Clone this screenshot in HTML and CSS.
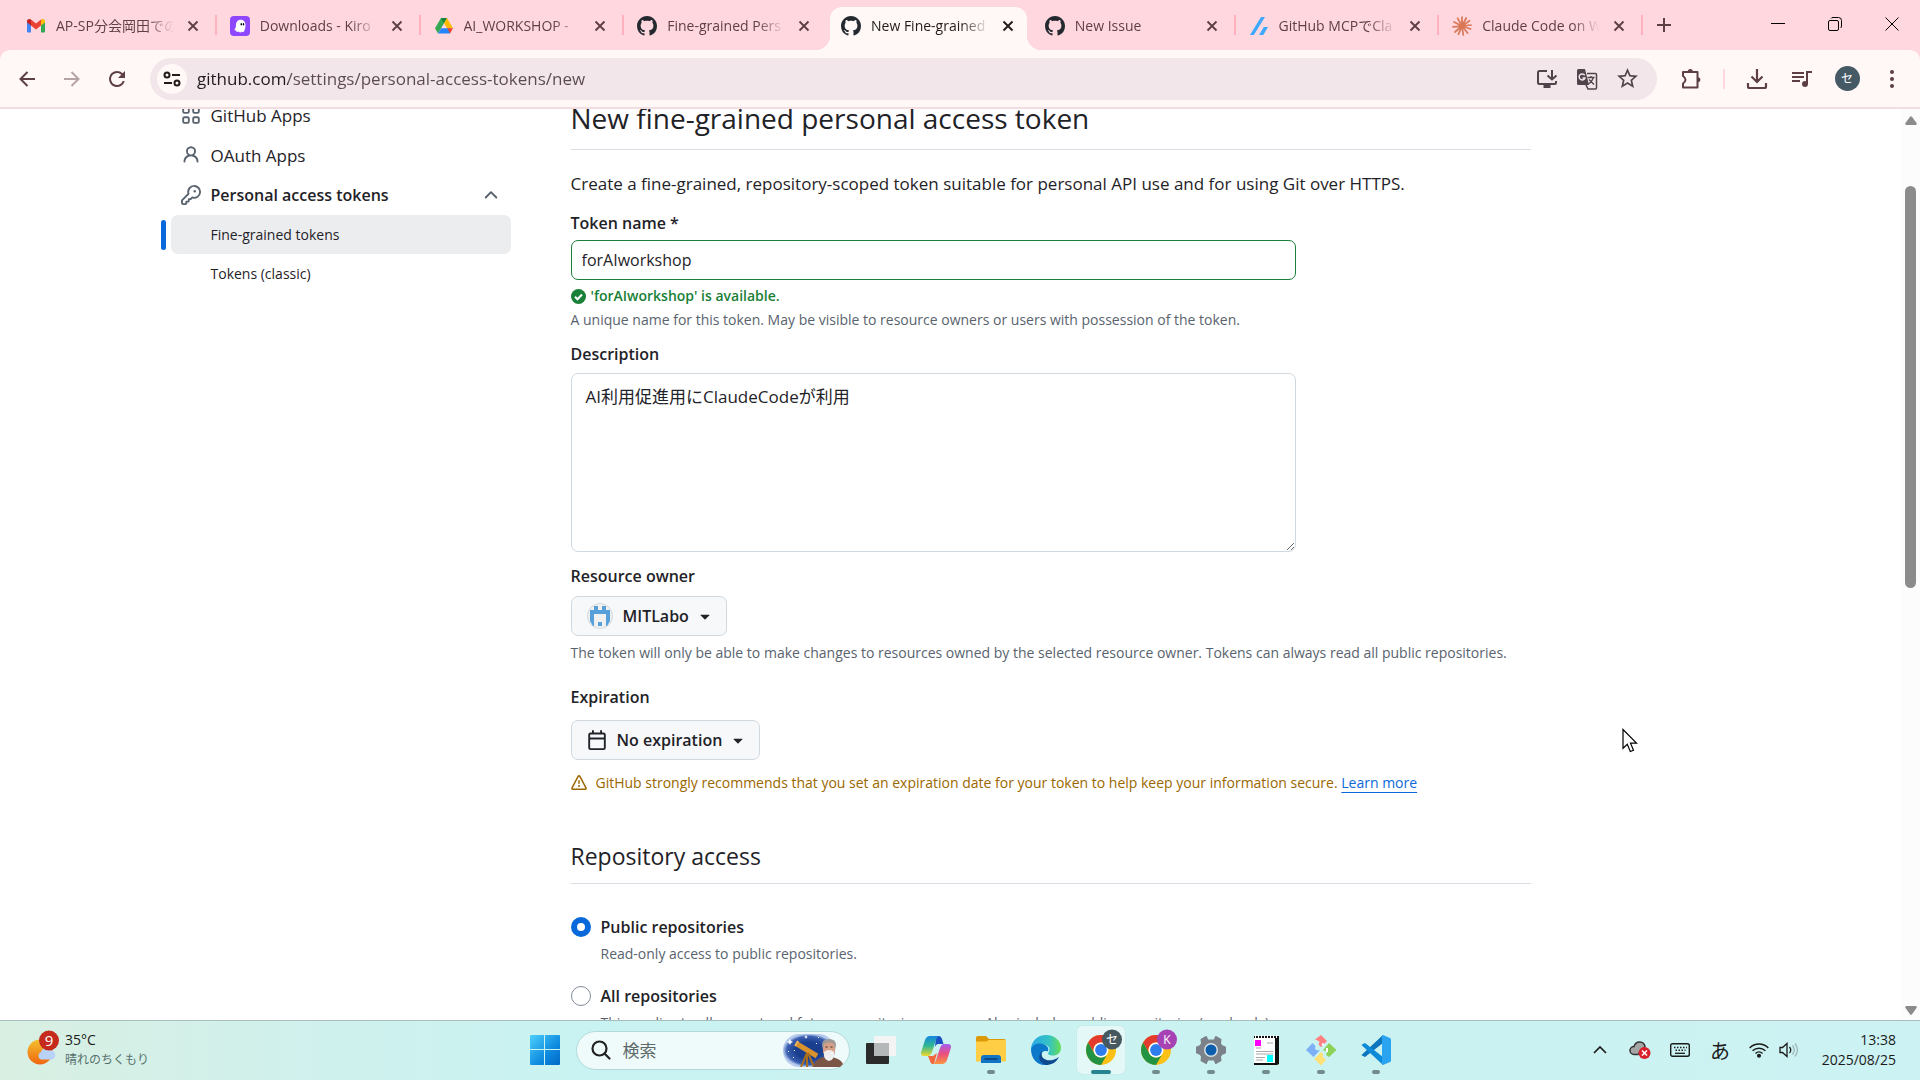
FILE: index.html
```html
<!DOCTYPE html>
<html lang="ja">
<head>
<meta charset="utf-8">
<title>New Fine-grained Personal Access Token</title>
<link rel="stylesheet" href="styles.css">
</head>
<body>
<svg class="defs" aria-hidden="true">
  <symbol id="gh" viewBox="0 0 16 16"><path fill="#24292f" d="M8 0c4.42 0 8 3.58 8 8a8.013 8.013 0 0 1-5.45 7.59c-.4.08-.55-.17-.55-.38 0-.27.01-1.13.01-2.2 0-.75-.25-1.23-.54-1.48 1.78-.2 3.65-.88 3.65-3.95 0-.88-.31-1.59-.82-2.15.08-.2.36-1.02-.08-2.12 0 0-.67-.22-2.2.82-.64-.18-1.32-.27-2-.27-.68 0-1.36.09-2 .27-1.53-1.03-2.2-.82-2.2-.82-.44 1.1-.16 1.92-.08 2.12-.51.56-.82 1.28-.82 2.15 0 3.06 1.86 3.75 3.64 3.95-.23.2-.44.55-.51 1.07-.46.21-1.61.55-2.33-.66-.15-.24-.6-.83-1.23-.82-.67.01-.27.38.01.53.34.19.73.9.82 1.13.16.45.68 1.31 2.69.94 0 .67.01 1.3.01 1.49 0 .21-.15.45-.55.38A7.995 7.995 0 0 1 0 8c0-4.42 3.58-8 8-8Z"/></symbol>
  <symbol id="x" viewBox="0 0 12 12"><path d="M1.5 1.5l9 9M10.5 1.5l-9 9" stroke="currentColor" stroke-width="1.9" fill="none"/></symbol>
  <symbol id="caret" viewBox="0 0 16 16"><path fill="currentColor" d="m4.427 7.427 3.396 3.396a.25.25 0 0 0 .354 0l3.396-3.396A.25.25 0 0 0 11.396 7H4.604a.25.25 0 0 0-.177.427Z"/></symbol>
  <symbol id="chrome" viewBox="0 0 30 30">
    <circle cx="15" cy="15" r="15" fill="#fbc116"/>
    <path fill="#e33b2e" d="M2.01 7.5A15 15 0 0 1 28 7.5H15A7.5 7.5 0 0 0 8.5 18.75z"/>
    <path fill="#229342" d="M2.01 7.5A15 15 0 0 0 15 30l6.5-11.25a7.5 7.5 0 0 1-13 0z"/>
    <circle cx="15" cy="15" r="7.5" fill="#fff"/><circle cx="15" cy="15" r="5.9" fill="#2f7ded"/>
  </symbol>
</svg>

<header class="browser">
  <div class="tabstrip">
    <ul class="tabs">
      <li class="tab"><div class="tab-body">
        <svg class="favicon" viewBox="0 0 20 20"><path fill="#4285f4" d="M1 5v10.500a1 1 0 0 0 1 1h3V8z"/><path fill="#34a853" d="M19 5v10.500a1 1 0 0 1-1 1h-3V8z"/><path fill="#c5221f" d="M1 5.200C1 3 3.500 2.400 5 3.600V9.600L1 6.600z"/><path fill="#fbbc04" d="M19 5.200C19 3 16.500 2.400 15 3.600V9.600l4-3z"/><path fill="#ea4335" d="M5 3.600l5 3.800 5-3.800v6L10 13.400 5 9.600z"/></svg>
        <span class="tab-title">AP-SP分会岡田での</span><button class="tab-close" aria-label="Close tab"><svg width="12" height="12"><use href="#x"/></svg></button></div></li>
      <li class="tab"><div class="tab-body">
        <svg class="favicon" viewBox="0 0 20 20"><rect width="20" height="20" rx="4" fill="#8e47ff"/><path fill="#fff" d="M6 9C6 2 15.500 2 15.500 9c0 3-.7 4.800-1.400 6.200-.6 1.300-1.800 1.200-2.300.4-.8 1.200-2.600 1.100-2.900-.1-1.200.8-2.900.5-2.700-1-1.700.4-2-.7-1.200-1.800.8-1.100 1-2.200 1-3.700z"/><ellipse cx="11.300" cy="8.300" rx=".7" ry="1.200"/><ellipse cx="13.500" cy="8.300" rx=".7" ry="1.200"/></svg>
        <span class="tab-title">Downloads - Kiro</span><button class="tab-close" aria-label="Close tab"><svg width="12" height="12"><use href="#x"/></svg></button></div></li>
      <li class="tab"><div class="tab-body">
        <svg class="favicon" viewBox="0 0 20 20"><path fill="#34a853" d="M7 2h6L10 7.300 4 17.500l-3-5.200z"/><path fill="#188038" d="M7 2h6L10 7.300z"/><path fill="#ffba00" d="M13 2l6 10.200h-5.800L10 7.300z"/><path fill="#2684fc" d="M7.200 12.200H16V17.500H4z"/><path fill="#ea4335" d="M13.200 12.200H19l-3 5.300z"/></svg>
        <span class="tab-title">AI_WORKSHOP -</span><button class="tab-close" aria-label="Close tab"><svg width="12" height="12"><use href="#x"/></svg></button></div></li>
      <li class="tab tab-plain"><div class="tab-body">
        <svg class="favicon"><use href="#gh"/></svg>
        <span class="tab-title">Fine-grained Pers</span><button class="tab-close" aria-label="Close tab"><svg width="12" height="12"><use href="#x"/></svg></button></div></li>
      <li class="tab tab-plain tab-active"><div class="tab-body">
        <svg class="favicon"><use href="#gh"/></svg>
        <span class="tab-title">New Fine-grained</span><button class="tab-close" aria-label="Close tab"><svg width="12" height="12"><use href="#x"/></svg></button></div></li>
      <li class="tab"><div class="tab-body">
        <svg class="favicon"><use href="#gh"/></svg>
        <span class="tab-title">New Issue</span><button class="tab-close" aria-label="Close tab"><svg width="12" height="12"><use href="#x"/></svg></button></div></li>
      <li class="tab"><div class="tab-body">
        <svg class="favicon" viewBox="0 0 20 20"><path fill="#3ea8ff" d="M1 19h3.800L16 1h-4z"/><path fill="#3ea8ff" d="M10 19h3.700a1 1 0 0 0 .9-.5L19 11h-4.200z"/></svg>
        <span class="tab-title">GitHub MCPでCla</span><button class="tab-close" aria-label="Close tab"><svg width="12" height="12"><use href="#x"/></svg></button></div></li>
      <li class="tab"><div class="tab-body">
        <svg class="favicon" viewBox="0 0 20 20"><path stroke="#d97757" stroke-width="1.700" stroke-linecap="round" d="M10 10V1M10 10l4.200-8M10 10l7.500-5.300M10 10l9-1M10 10l8.500 3M10 10l5.600 7M10 10l1.300 9M10 10l-3.600 8.300M10 10l-7 6M10 10l-9 .9M10 10L2 6M10 10L5.500 2.200"/></svg>
        <span class="tab-title">Claude Code on W</span><button class="tab-close" aria-label="Close tab"><svg width="12" height="12"><use href="#x"/></svg></button></div></li>
    </ul>
    <button class="new-tab" aria-label="New tab"><svg width="14" height="14" viewBox="0 0 14 14"><path d="M7 0v14M0 7h14" stroke="currentColor" stroke-width="2"/></svg></button>
    <div class="window-controls">
      <button aria-label="Minimize"><svg width="14" height="14" viewBox="0 0 14 14"><path d="M0 6.500h14" stroke="#000"/></svg></button>
      <button aria-label="Restore"><svg width="14" height="14" viewBox="0 0 14 14" fill="none" stroke="#000"><rect x=".5" y="3.500" width="10" height="10" rx="1.500"/><path d="M3 1.500Q3.500.5 5 .5h5.500a3 3 0 0 1 3 3V9q0 1.500-1 2"/></svg></button>
      <button aria-label="Close"><svg width="14" height="14" viewBox="0 0 14 14"><path d="M.5.5l13 13M13.500.5l-13 13" stroke="#000"/></svg></button>
    </div>
  </div>
  <div class="toolbar">
    <button class="tool" aria-label="Back"><svg width="16" height="16" viewBox="0 0 16 16"><path d="M16 8H2M8.500 1L1.500 8l7 7" fill="none" stroke="currentColor" stroke-width="2"/></svg></button>
    <button class="tool tool-off" aria-label="Forward"><svg width="16" height="16" viewBox="0 0 16 16"><path d="M0 8h14M7.500 1l7 7-7 7" fill="none" stroke="currentColor" stroke-width="2"/></svg></button>
    <button class="tool" aria-label="Reload"><svg width="24" height="24" viewBox="0 0 24 24"><path fill="currentColor" d="M17.650 6.350A7.950 7.950 0 0 0 12 4a8 8 0 1 0 7.730 10h-2.080A6 6 0 1 1 12 6c1.660 0 3.140.690 4.220 1.780L13 11h7V4l-2.350 2.350z"/></svg></button>
    <div class="omnibox">
      <button class="site-info" aria-label="Site information"><svg width="18" height="16" viewBox="0 0 18 16" fill="none" stroke="#201a1b" stroke-width="2"><circle cx="4" cy="4" r="2.500"/><path d="M9 4h8M1 12h8"/><circle cx="14" cy="12" r="2.500"/></svg></button>
      <input class="url" type="text" aria-label="Address" value="github.com/settings/personal-access-tokens/new">
      <button class="tool" aria-label="Install"><svg width="22" height="20" viewBox="0 0 22 20" fill="none" stroke="currentColor" stroke-width="2"><path d="M11 2H3.500Q2 2 2 3.500v10Q2 15 3.500 15h15q1.500 0 1.500-1.500V12M16 1v9M11.500 6.500L16 10.500l4.500-4"/><path d="M7.500 17.500h7" stroke-width="3"/></svg></button>
      <button class="tool" aria-label="Translate"><svg width="22" height="22" viewBox="0 0 22 22"><path fill="currentColor" d="M2.500 1H9l4 16H2.500Q1 17 1 15.500v-13Q1 1 2.500 1z"/><path d="M11 5.500h8.500q1 0 1 1V20q0 1-1 1H12l-2-4" fill="none" stroke="currentColor" stroke-width="1.500"/><path d="M8.700 7.300A3 3 0 1 0 9 10H6.500" fill="none" stroke="#f2e6ea" stroke-width="1.500"/><path d="M11.500 9.500h7M15 8v1.500M17.500 9.500q-1.500 4.500-5 6.500M13 11.500l5 5" fill="none" stroke="currentColor" stroke-width="1.300"/></svg></button>
      <button class="tool" aria-label="Bookmark"><svg width="23" height="23" viewBox="1 1 22 22"><path fill="currentColor" d="M22 9.240l-7.190-.620L12 2 9.190 8.630 2 9.240l5.460 4.730L5.820 21 12 17.270 18.180 21l-1.630-7.030L22 9.240zM12 15.400l-3.760 2.270 1-4.280-3.320-2.880 4.380-.380L12 6.100l1.710 4.040 4.380.380-3.320 2.880 1 4.280L12 15.400z"/></svg></button>
    </div>
    <button class="tool" aria-label="Extensions"><svg width="22" height="22" viewBox="0 0 22 22"><path d="M3 4h14.500v15.500H3V15.500q2.500-1.500 2.500-3.700T3 8z" fill="none" stroke="currentColor" stroke-width="2" stroke-linejoin="round"/><path fill="currentColor" d="M7.800 3.500a2.500 2.500 0 0 1 5 0zM18 9.200a2.500 2.500 0 0 1 0 5z"/></svg></button>
    <span class="tool-divider"></span>
    <button class="tool" aria-label="Downloads"><svg width="22" height="22" viewBox="0 0 22 22"><path d="M11 1v13M5.500 8.500L11 14l5.500-5.500M2 15v3.500Q2 20 3.500 20h15q1.500 0 1.500-1.500V15" fill="none" stroke="currentColor" stroke-width="2.200"/></svg></button>
    <button class="tool" aria-label="Media"><svg width="20" height="18" viewBox="0 0 20 18"><path d="M0 3h12M0 7h12M0 11h8M15 14V2h5" fill="none" stroke="currentColor" stroke-width="2"/><circle cx="13" cy="14" r="3" fill="currentColor"/></svg></button>
    <button class="tool" aria-label="Profile"><span class="profile">セ</span></button>
    <button class="tool" aria-label="Menu"><svg width="6" height="20" viewBox="0 0 6 20" fill="currentColor"><circle cx="3" cy="3" r="2"/><circle cx="3" cy="10" r="2"/><circle cx="3" cy="17" r="2"/></svg></button>
  </div>
</header>

<div class="viewport">
  <div class="page">
    <nav class="sidenav">
      <a class="nav-item" href="#"><svg width="20" height="20" viewBox="0 0 16 16" fill="none" stroke="currentColor" stroke-width="1.500"><rect x="1.750" y="1.750" width="4.500" height="4.500" rx="1"/><rect x="9.750" y="1.750" width="4.500" height="4.500" rx="1"/><rect x="1.750" y="9.750" width="4.500" height="4.500" rx="1"/><rect x="9.750" y="9.750" width="4.500" height="4.500" rx="1"/></svg>GitHub Apps</a>
      <a class="nav-item" href="#"><svg width="20" height="20" viewBox="0 0 16 16"><path fill="currentColor" d="M10.561 8.073a6.005 6.005 0 0 1 3.432 5.142.75.75 0 1 1-1.498.07 4.5 4.5 0 0 0-8.99 0 .75.75 0 0 1-1.498-.07 6.004 6.004 0 0 1 3.431-5.142 3.999 3.999 0 1 1 5.123 0ZM10.5 5a2.5 2.5 0 1 0-5 0 2.5 2.5 0 0 0 5 0Z"/></svg>OAuth Apps</a>
      <button class="nav-item nav-group" aria-expanded="true"><svg width="20" height="20" viewBox="0 0 16 16"><path fill="currentColor" d="M10.5 0a5.499 5.499 0 1 1-1.288 10.848l-.932.932a.749.749 0 0 1-.53.22H7v.75a.749.749 0 0 1-.22.53l-.5.5a.749.749 0 0 1-.53.22H5v.75a.749.749 0 0 1-.22.53l-.5.5a.749.749 0 0 1-.53.22h-2A1.75 1.75 0 0 1 0 14.25v-2c0-.199.079-.389.22-.53l4.932-4.932A5.5 5.5 0 0 1 10.5 0Zm-4 5.5c-.001.431.069.86.205 1.269a.75.75 0 0 1-.181.768L1.5 12.56v1.69c0 .138.112.25.25.25h1.69l.06-.06v-1.19a.75.75 0 0 1 .75-.75h1.19l.06-.06v-1.19a.75.75 0 0 1 .75-.75h1.19l1.023-1.025a.75.75 0 0 1 .768-.18A4 4 0 1 0 6.5 5.5ZM11 6a1 1 0 1 1 0-2 1 1 0 0 1 0 2Z"/></svg><span class="nav-label">Personal access tokens</span><svg width="20" height="20" viewBox="0 0 16 16"><path fill="currentColor" d="M3.220 10.530a.749.749 0 0 1 0-1.060l4.250-4.250a.749.749 0 0 1 1.060 0l4.250 4.250a.751.751 0 1 1-1.060 1.060L8 6.811 4.280 10.530a.749.749 0 0 1-1.060 0Z"/></svg></button>
      <a class="nav-item nav-sub nav-current" href="#" aria-current="page">Fine-grained tokens</a>
      <a class="nav-item nav-sub" href="#">Tokens (classic)</a>
    </nav>

    <main class="content">
      <h1 class="title">New fine-grained personal access token</h1>
      <p class="intro">Create a fine-grained, repository-scoped token suitable for personal API use and for using Git over HTTPS.</p>

      <form class="form">
        <div class="field">
          <label class="label" for="name">Token name *</label>
          <input class="input" id="name" type="text" value="forAIworkshop">
          <p class="valid"><svg width="15" height="15" viewBox="0 0 15 15"><circle cx="7.500" cy="7.500" r="7.500" fill="#1a7f37"/><path d="M4 7.800l2.500 2.500L11 5.500" fill="none" stroke="#fff" stroke-width="2"/></svg>'forAIworkshop' is available.</p>
          <p class="caption">A unique name for this token. May be visible to resource owners or users with possession of the token.</p>
        </div>
        <div class="field">
          <label class="label" for="desc">Description</label>
          <textarea class="input textarea" id="desc">AI利用促進用にClaudeCodeが利用</textarea>
        </div>
        <div class="field field-owner">
          <span class="label" id="owner-label">Resource owner</span>
          <button type="button" class="menu-button" aria-haspopup="menu" aria-labelledby="owner-label owner"><svg width="26" height="26" viewBox="0 0 26 26"><circle cx="13" cy="13" r="12.500" fill="#f0f0f0" stroke="#d1d9e0"/><path fill="#579fd8" d="M7 3h4v4h4V3h4v4h4v4.500V18l-3 5h-1V11H7v12H6l-3-5V7h4z"/><path fill="#579fd8" d="M11 19h4v4h-4z"/></svg><span id="owner">MITLabo</span><svg class="caret" width="20" height="20"><use href="#caret"/></svg></button>
          <p class="caption">The token will only be able to make changes to resources owned by the selected resource owner. Tokens can always read all public repositories.</p>
        </div>
        <div class="field field-expiry">
          <span class="label" id="exp-label">Expiration</span>
          <button type="button" class="menu-button" aria-haspopup="menu" aria-labelledby="exp-label exp"><svg width="20" height="20" viewBox="0 0 16 16"><path fill="currentColor" d="M4.750 0a.75.75 0 0 1 .75.75V2h5V.75a.75.75 0 0 1 1.500 0V2h1.250c.966 0 1.750.784 1.750 1.750v10.500A1.750 1.750 0 0 1 13.250 16H2.750A1.750 1.750 0 0 1 1 14.250V3.750C1 2.784 1.784 2 2.750 2H4V.75A.75.75 0 0 1 4.750 0ZM2.500 7.500v6.750c0 .138.112.25.25.25h10.500a.25.25 0 0 0 .25-.25V7.500Zm10.750-4H2.750a.25.25 0 0 0-.25.25V6h11V3.750a.25.25 0 0 0-.25-.25Z"/></svg><span id="exp">No expiration</span><svg class="caret" width="20" height="20"><use href="#caret"/></svg></button>
          <p class="warning"><svg width="16" height="16" viewBox="0 0 16 16"><path fill="currentColor" d="M6.457 1.047c.659-1.234 2.427-1.234 3.086 0l6.082 11.378A1.75 1.75 0 0 1 14.082 15H1.918a1.75 1.75 0 0 1-1.543-2.575Zm1.763.707a.25.25 0 0 0-.44 0L1.698 13.132a.25.25 0 0 0 .22.368h12.164a.25.25 0 0 0 .22-.368Zm.53 3.996v2.500a.75.75 0 0 1-1.500 0v-2.500a.75.75 0 0 1 1.500 0ZM9 11a1 1 0 1 1-2 0 1 1 0 0 1 2 0Z"/></svg><span>GitHub strongly recommends that you set an expiration date for your token to help keep your information secure. <a class="learn" href="#">Learn more</a></span></p>
        </div>
        <h2 class="subtitle">Repository access</h2>
        <div class="choice">
          <input class="radio" type="radio" name="repos" id="public" checked>
          <label class="label" for="public">Public repositories</label>
          <p class="caption">Read-only access to public repositories.</p>
        </div>
        <div class="choice">
          <input class="radio" type="radio" name="repos" id="all">
          <label class="label" for="all">All repositories</label>
          <p class="caption">This applies to all current and future repositories you own. Also includes public repositories (read-only).</p>
        </div>
      </form>
    </main>
  </div>
  <div class="scrollbar" aria-hidden="true">
    <svg width="12" height="9" viewBox="0 0 12 9"><path fill="#8b8b8b" d="M5 .8Q6-.4 7 .8l4.700 6.500Q12 9 10.500 9h-9Q0 9 .3 7.300z"/></svg>
    <div class="track"><div class="thumb"></div></div>
    <svg width="12" height="9" viewBox="0 0 12 9"><path fill="#8b8b8b" d="M5 8.200q1 1.200 2 0l4.700-6.500Q12 0 10.500 0h-9Q0 0 .3 1.700z"/></svg>
  </div>
  <svg class="cursor" width="16" height="26" viewBox="0 0 16 26"><path d="M1 1.500v18.800l4.300-4 3 7.200 3.200-1.300-3-7H14.500z" fill="#fff" stroke="#000" stroke-width="1.200"/></svg>
</div>

<footer class="taskbar">
  <div class="weather">
    <svg width="34" height="36" viewBox="0 0 34 36">
      <defs><linearGradient id="sun" x1="0" y1="0" x2="0" y2="1"><stop offset="0" stop-color="#f3c22f"/><stop offset="1" stop-color="#f0640f"/></linearGradient></defs>
      <circle cx="13" cy="22" r="12.500" fill="url(#sun)"/><path fill="#b8d2f8" d="M14 29.500a4 4 0 0 1 0-7.500 5.500 5.500 0 0 1 10-1.500 4.600 4.600 0 0 1 1 9z"/><circle cx="22" cy="10.500" r="10" fill="#c42b1c"/><text class="badge-text" x="22" y="16" text-anchor="middle">9</text>
    </svg>
    <div class="weather-text"><span>35°C</span><span class="muted">晴れのちくもり</span></div>
  </div>
  <div class="apps">
    <button class="app" aria-label="Start"><svg width="30" height="30" viewBox="0 0 30 30"><defs><linearGradient id="win" gradientUnits="userSpaceOnUse" x1="0" y1="0" x2="30" y2="30"><stop offset="0" stop-color="#4cd0fb"/><stop offset=".6" stop-color="#0f8be0"/><stop offset="1" stop-color="#0067c5"/></linearGradient></defs><path fill="url(#win)" d="M1 0h13v14H0V1q0-1 1-1zM15 0h14q1 0 1 1v13H15zM0 15h14v15H1q-1 0-1-1zM15 15h15v14q0 1-1 1H15z"/></svg></button>
    <label class="search">
      <svg width="20" height="20" viewBox="0 0 20 20" fill="none" stroke="#222" stroke-width="2.200"><circle cx="8.500" cy="8.500" r="7"/><path d="M13.500 13.500l5 5" stroke-linecap="round"/></svg>
      <input type="search" placeholder="検索" aria-label="検索">
      <svg class="highlight" width="62" height="34" viewBox="0 0 62 34">
        <defs><radialGradient id="sky"><stop offset=".5" stop-color="#1b3f8f"/><stop offset=".85" stop-color="#3a5fb0"/><stop offset="1" stop-color="#b8cdee"/></radialGradient></defs>
        <rect x="1" y="1" width="52" height="33" rx="16" fill="url(#sky)"/>
        <path fill="#fff" d="M8 6l1 2 2 1-2 1-1 2-1-2-2-1 2-1zM24 2l.7 1.500L26 4l-1.300.6L24 6l-.7-1.400L22 4l1.300-.5zM36 4h1v1h-1zM6 18h1v1H6zM11 24h1v1h-1zM12 17h1v1h-1zM34 10h1v1h-1z"/>
        <path d="M15 11l20 12" stroke="#d9922c" stroke-width="5"/><path d="M16 8l-3 5" stroke="#f0b860" stroke-width="2"/><path d="M25 20l-6 14M25 20v14M26 20l6 14" stroke="#a96d1c" stroke-width="2"/>
        <path fill="#7b5546" d="M31 34q2-8 10-10h9q9 2 11 7l-3 3z"/><path fill="#d8a088" d="M41 10q6-5 12 0v10q-6 6-12 0z"/><path fill="#9d9a97" d="M40 12q0-6 7-6t7 6l-1 5-1-6q-5-3-10 0l-1 6z"/><path fill="#eee" d="M42 19q2-2 5-2t5 2q1 8-5 9-6-1-5-9z"/><path d="M43.500 14h2M48.500 14h2" stroke="#333"/>
      </svg>
    </label>
    <div class="app-row">
      <button class="app" aria-label="Task view"><svg width="30" height="30" viewBox="0 0 30 30"><rect y="8" width="23" height="21" rx="1" fill="#2b2b2b"/><rect x="8" y="1" width="22" height="20" rx="1" fill="#f4f4f4"/><path d="M8 8h15v13H8z" fill="#b4b8b8"/></svg></button>
      <button class="app" aria-label="Copilot"><svg width="30" height="28" viewBox="0 0 30 28"><defs><linearGradient id="cpa" x1="0" y1="0" x2="0" y2="1"><stop offset="0" stop-color="#1686df"/><stop offset=".5" stop-color="#2fb893"/><stop offset="1" stop-color="#f0d72a"/></linearGradient><linearGradient id="cpb" x1="0" y1="1" x2="0" y2="0"><stop offset="0" stop-color="#f8953d"/><stop offset=".5" stop-color="#ed4f7e"/><stop offset="1" stop-color="#a55cf2"/></linearGradient></defs><path fill="#1b4fc4" d="M15 0h3q2 0 3 3l1.500 5H17q-2 0-3 3z"/><path fill="url(#cpa)" d="M9 0h9q-2 .5-3 4l-4 12q-1.500 4-4 4H3q-4 0-2.700-4.500L4 4q1.500-4 5-4z"/><path fill="#f4663c" d="M7 20h5l4-3-3 11h-1q-2.500 0-3-3z"/><path fill="url(#cpb)" d="M21 28h-9q2-.5 3-4l4-12q1.500-4 4-4h4q4 0 2.700 4.500L26 24q-1.500 4-5 4z"/></svg></button>
      <button class="app app-open" aria-label="Explorer"><svg width="30" height="28" viewBox="0 0 30 28"><path fill="#dd9808" d="M0 2q0-2 2-2h8l3 3h15q2 0 2 2v6H0z"/><path fill="#ffce45" d="M0 5.500h10L13 4h17v21.500H0z"/><path fill="#1274c4" d="M5 27v-5q0-3 3-3h14q3 0 3 3v5z"/><path d="M8.500 23h13" stroke="#083f77" stroke-width="1.500"/></svg></button>
      <button class="app" aria-label="Edge"><svg width="30" height="30" viewBox="0 0 30 30"><defs><linearGradient id="ed"><stop offset="0" stop-color="#2aa9e8"/><stop offset=".6" stop-color="#35c2c4"/><stop offset="1" stop-color="#65df53"/></linearGradient></defs><path fill="url(#ed)" d="M0 13C1.500 4 8 0 15 0c9 0 15 6 15 13 0 5-4 7.500-8 7.500-4 0-6-1.500-4.500-3 3-5-1-8-6-8C6 9.500 2 11 0 15z"/><path fill="#0c78ca" d="M0 14c2-5 8-6.500 12-5 5 1.500 6.500 5 4.500 7.500-6-2-8 4-4 9 2 2.500 5 4 5 4C7 32 0 24 0 14z"/><path fill="#0f4a91" d="M11 16c-3 8 7 13 17 6-3 6-8 8-13 8-7-2-9-9-4-14z"/></svg></button>
      <button class="app app-active" aria-label="Chrome"><svg width="46" height="46" viewBox="-7 0 46 46"><use href="#chrome" x="1" y="8" width="30" height="30"/><circle cx="27" cy="12.500" r="10" fill="#45575f"/><text class="chrome-badge" x="27" y="17" text-anchor="middle">セ</text></svg></button>
      <button class="app app-open" aria-label="Chrome K"><svg width="46" height="46" viewBox="-7 0 46 46"><use href="#chrome" x="1" y="8" width="30" height="30"/><circle cx="27" cy="12.500" r="10" fill="#a742b4"/><text class="chrome-badge" x="27" y="17" text-anchor="middle">K</text></svg></button>
      <button class="app app-open" aria-label="Settings"><svg width="30" height="30" viewBox="0 0 30 30"><path fill="#7b8289" stroke="#7b8289" stroke-width="2" stroke-linejoin="round" d="M11.500 5.500L10 2 5.500 4.500 6 8.500 4.500 11 1 12.500v5L4.500 19 6 21.500l-.5 4L10 28l1.500-3.500h7L20 28l4.500-2.500-.5-4 1.500-2.500 3.500-1.500v-5L25.500 11 24 8.500l.5-4L20 2l-1.500 3.500z"/><circle cx="15" cy="15" r="7" fill="#d9e2e6"/><circle cx="15" cy="15" r="5.500" fill="#0d5fae"/></svg></button>
      <button class="app app-open" aria-label="Editor"><svg width="28" height="30" viewBox="0 0 28 30"><path fill="#111" d="M2 1h25v28l-2 1H2z"/><path fill="#fff" d="M2 3h21v25H2z"/><path d="M3 1.500h22" stroke="#fff" stroke-width="3" stroke-dasharray="1 2"/><path fill="#f0f" d="M3 5h6v6H3z"/><path fill="#0ff" d="M15 20h6v7h-6z"/><path d="M4 16.500h17M4 19h17M4 22.500h9M4 25h7M15 8h6M4 13h5" stroke="#aaa"/></svg></button>
      <button class="app app-open" aria-label="Git"><svg width="32" height="32" viewBox="0 0 32 32"><path fill="#ff8080" d="M16 1l6 6-6 6-2.500-2.500 1-3-3-1.500-1.500-.5z"/><path fill="#7eb0f8" d="M7.500 9l3 3-.5 3 2.500 1.500L15 16l-6.500 7L1 16z"/><path fill="#8bd256" d="M24 9l7.500 7L24 23l-3-2 1-3-4-2z"/><path fill="#ffe175" d="M16 18l2 2v4l3 1 1-.5-6 7L9.500 25z"/><path d="M17 10l2 1M22 14v4" stroke="#fff" stroke-width="2"/></svg></button>
      <button class="app app-open" aria-label="Code"><svg width="30" height="30" viewBox="0 0 30 30"><path fill="#0b76be" d="M1 19.500L22 0v8L4 22l-3-1.500q-.8-.4 0-1z"/><path fill="#0d8ad8" d="M1 10.500L22 30v-8L4 8 1 9.500q-.8.500 0 1z"/><path fill="#2aa3f0" d="M22 0l7 3q1 .5 1 1.500v21q0 1-1 1.500l-7 3q-1 0-1-1.500v-27Q21 0 22 0z"/></svg></button>
    </div>
  </div>
  <div class="tray">
    <button class="tray-item" aria-label="Show hidden icons"><svg width="14" height="8" viewBox="0 0 14 8"><path d="M1 7l6-6 6 6" fill="none" stroke="#1b1b1b" stroke-width="1.700"/></svg></button>
    <button class="tray-item" aria-label="OneDrive"><svg width="22" height="18" viewBox="0 0 22 18"><path fill="#a5a5a5" stroke="#333" stroke-width="1.500" d="M5 13.500a4 4 0 0 1 0-8C7-1 15 0 16 5.500L9 13.500z"/><circle cx="15.500" cy="12" r="6" fill="#d9202b"/><path d="M13 9.500l5 5M18 9.500l-5 5" stroke="#fff" stroke-width="1.500"/></svg></button>
    <button class="tray-item" aria-label="Keyboard"><svg width="20" height="14" viewBox="0 0 20 14"><rect x=".7" y=".7" width="18.600" height="12.600" rx="1.800" fill="none" stroke="#1b1b1b" stroke-width="1.400"/><path d="M4 4.500h13M5.500 7.200h10" stroke="#1b1b1b" stroke-width="1.500" stroke-dasharray="1.500 1.500"/><path d="M5 10.300h10" stroke="#1b1b1b" stroke-width="1.300"/></svg></button>
    <button class="tray-item ime">あ</button>
    <button class="tray-item tray-quick" aria-label="Network and volume"><svg width="20" height="16" viewBox="0 0 20 16" fill="none" stroke="#1b1b1b" stroke-width="1.500"><path d="M.7 6a13 13 0 0 1 18.600 0M3.600 8.800a9 9 0 0 1 12.800 0M6.500 11.500a5 5 0 0 1 7 0"/><circle cx="10" cy="13.800" r="1.300" fill="#1b1b1b"/></svg><svg width="20" height="16" viewBox="0 0 20 16" fill="none" stroke="#1b1b1b" stroke-width="1.300"><path d="M1 5.500h2.500L8 1.500v13L3.500 10.500H1zM10.500 5q2.500 3 0 6"/><path d="M13.500 3.500q3.500 4.500 0 9M16 1.500q5 6.500 0 13" stroke="#9fb5b5"/></svg></button>
    <div class="clock"><time>13:38</time><time>2025/08/25</time></div>
  </div>
</footer>
</body>
</html>
```
FILE: styles.css
```css
*, *::before, *::after { box-sizing: border-box; }

body {
  margin: 0;
  height: 100vh;
  display: flex;
  flex-direction: column;
  overflow: hidden;
  font-family: "Open Sans", "Noto Sans CJK JP", sans-serif;
  font-size: 16px;
  color: #1f2328;
  background: #fff;
}
button, input, textarea { font: inherit; color: inherit; }
button { border: 0; padding: 0; background: none; }
h1, h2, p, ul { margin: 0; padding: 0; font-weight: 400; }
svg { flex: none; display: block; }
.defs { position: absolute; width: 0; height: 0; }

/* Tab strip */
.browser { flex: none; background: #ffd8df; color: #5d3f44; }
.tabstrip { display: flex; height: 50px; padding-left: 13px; }
.tabs { display: flex; flex: 0 1 1630px; min-width: 0; list-style: none; }
.tab { position: relative; flex: 1 1 0; min-width: 0; padding: 7px 5px 0 2px; }
.tab::after {
  content: "";
  position: absolute;
  right: 0;
  top: 15px;
  width: 2px;
  height: 20px;
  background: #ffb2be;
}
.tab-plain::after { content: none; }
.tab-body {
  position: relative;
  display: flex;
  align-items: center;
  height: 43px;
  padding: 0 10px 6px 11px;
}
.favicon { width: 20px; height: 20px; }
.tab-title {
  flex: 1;
  min-width: 0;
  margin: 0 10px 0 10px;
  overflow: hidden;
  white-space: nowrap;
  font-size: 14px;
  line-height: 20px;
  mask-image: linear-gradient(90deg, #000 calc(100% - 28px), transparent);
}
.tab-close, .new-tab { display: grid; place-items: center; }
.tab-close { width: 18px; height: 18px; }
.tab-active .tab-body { background: #fff8f7; border-radius: 12px 12px 0 0; color: #201a1b; }
.tab-active .tab-body::before, .tab-active .tab-body::after {
  content: "";
  position: absolute;
  bottom: 0;
  width: 14px;
  height: 14px;
}
.tab-active .tab-body::before { right: 100%; background: radial-gradient(circle at 0 0, transparent 14px, #fff8f7 14px); }
.tab-active .tab-body::after { left: 100%; background: radial-gradient(circle at 100% 0, transparent 14px, #fff8f7 14px); }
.new-tab { width: 42px; }
.window-controls { display: flex; margin-left: auto; padding-bottom: 2px; }
.window-controls button { width: 57px; display: grid; place-items: center; }

/* Toolbar */
.toolbar {
  display: flex;
  align-items: center;
  gap: 5px;
  height: 59px;
  padding: 0 8px 0 7px;
  background: #fff8f7;
  border-bottom: 2px solid #f3dde0;
  border-radius: 10px 10px 0 0;
}
.tool { flex: none; width: 40px; height: 40px; display: grid; place-items: center; }
.tool-off { color: #b5a3a6; }
.omnibox {
  flex: 1;
  display: flex;
  align-items: center;
  height: 42px;
  margin: 0 9px 0 8px;
  padding: 0 10px 0 7px;
  border-radius: 21px;
  background: #f2e6ea;
  color: #51434a;
}
.site-info {
  width: 30px;
  height: 30px;
  display: grid;
  place-items: center;
  border-radius: 50%;
  background: #fff8f7;
}
.url {
  flex: 1;
  min-width: 0;
  margin-left: 10px;
  padding: 0;
  border: 0;
  font-size: 17px;
  background: linear-gradient(90deg, #201a1b 91px, #5b4a50 91px);
  background-clip: text;
  -webkit-text-fill-color: transparent;
}
.tool-divider { width: 2px; height: 20px; margin: 0 7px; background: #ffd8df; }
.profile {
  display: grid;
  place-items: center;
  width: 25px;
  height: 25px;
  border-radius: 50%;
  background: #455a64;
  color: #fff;
  font-size: 12px;
  line-height: 1;
}

/* Page area, scrolled a little way down */
.viewport { position: relative; flex: 1; min-height: 0; display: flex; overflow: hidden; }
.page {
  flex: 1;
  min-width: 0;
  max-width: 1600px;
  margin: -14px auto 0;
  padding: 0 20px;
  display: grid;
  grid-template-columns: 340px minmax(0, 960px);
  column-gap: 60px;
  align-items: start;
}

.nav-item {
  position: relative;
  display: flex;
  align-items: center;
  gap: 10px;
  width: 100%;
  height: 40px;
  padding: 0 10px;
  color: #1f2328;
  font-size: 17px;
  text-decoration: none;
  text-align: left;
  border-radius: 7px;
}
.nav-item svg { color: #59636e; }
.nav-group { font-size: 16px; font-weight: 600; }
.nav-label { flex: 1; white-space: nowrap; }
.nav-sub { height: 39px; padding-left: 40px; font-size: 14px; }
.nav-current { background: #ecedef; }
.nav-current::before {
  content: "";
  position: absolute;
  left: -10px;
  top: 5px;
  width: 5px;
  height: 30px;
  border-radius: 3px;
  background: #0969da;
}

.content { padding-top: 5px; }
.title { padding-bottom: 13px; border-bottom: 1px solid #d8dee4; font-size: 28px; line-height: 36px; }
.intro { margin: 22px 0 15px; font-size: 17px; line-height: 24px; }
.form { display: flex; flex-direction: column; }
.field { display: flex; flex-direction: column; align-items: flex-start; margin-bottom: 12px; }
.label { font-weight: 600; line-height: 24px; }
.input {
  width: 100%;
  max-width: 725px;
  height: 40px;
  margin: 5px 0 6px;
  padding: 0 10px;
  border: 1px solid #1a7f37;
  border-radius: 7px;
  background: #fff;
}
.textarea { height: 179px; margin: 7px 0 0; padding: 10px 14px; border-color: #d1d9e0; font-size: 17px; line-height: 26px; display: block; resize: vertical; }
.valid, .warning { display: flex; align-items: center; font-size: 14px; line-height: 20px; }
.valid { gap: 5px; margin-bottom: 4px; color: #1a7f37; font-weight: 600; }
.caption { font-size: 14px; line-height: 20px; color: #59636e; }
.menu-button {
  display: flex;
  align-items: center;
  gap: 10px;
  height: 40px;
  margin: 8px 0 7px;
  padding: 0 11px 0 15px;
  border: 1px solid #d1d9e0;
  border-radius: 7px;
  background: #f6f8fa;
  font-weight: 600;
}
.menu-button .caret { margin-left: -4px; }
.field-owner { margin-bottom: 22px; }
.field-expiry { margin-bottom: 47px; }
.field-expiry .menu-button { margin: 11px 0 13px; }
.warning { gap: 9px; color: #9a6700; }
.learn { color: #0969da; text-underline-offset: 4px; }
.subtitle { margin-bottom: 31px; padding-bottom: 11px; border-bottom: 1px solid #d8dee4; font-size: 23px; line-height: 32px; }
.choice { display: grid; grid-template-columns: 20px 1fr; gap: 5px 10px; align-items: center; margin-bottom: 20px; }
.choice .caption { grid-column: 2; white-space: nowrap; }
.radio { appearance: none; width: 20px; height: 20px; margin: 0; border: 1px solid #818b98; border-radius: 50%; background: #fff; }
.radio:checked { border: 6px solid #0969da; }

.scrollbar { flex: none; display: flex; flex-direction: column; align-items: center; width: 19px; padding: 7px 0 5px; background: #fcfcfc; }
.track { flex: 1; width: 11px; padding: 61px 0; }
.thumb { height: 53%; border-radius: 6px; background: #8b8b8b; }
.cursor { position: absolute; left: 1622px; top: 619px; }

/* Taskbar */
.taskbar {
  flex: none;
  display: grid;
  grid-template-columns: 1fr auto 1fr;
  align-items: center;
  height: 60px;
  padding-bottom: 1px;
  border-top: 1px solid #a9bdbd;
  background: linear-gradient(90deg, #d9efe2, #d0f1ed 16%, #c9f3f2 30%, #caf2f1 70%, #cdf2f3);
}
.weather { display: flex; gap: 4px; padding-left: 27px; }
.weather-text { display: flex; flex-direction: column; font-size: 14px; line-height: 20px; color: #1b1b1b; }
.weather-text .muted { font-size: 12px; color: #56706c; }
.badge-text { font-size: 15px; fill: #fff; }
.apps { display: flex; align-items: center; gap: 7px; }
.app-row { display: flex; gap: 7px; }
.app { position: relative; width: 48px; height: 48px; display: grid; place-items: center; border-radius: 5px; }
.app-open::after, .app-active::after {
  content: "";
  position: absolute;
  left: 20px;
  bottom: 0;
  width: 8px;
  height: 4px;
  border-radius: 2px;
  background: #728b8b;
}
.app-active { background: #e4f8f8; box-shadow: 0 0 1px #a9cccc; }
.app-active::after { left: 14px; width: 20px; background: #26838f; }
.chrome-badge { font-size: 12px; fill: #fff; }
.search {
  display: flex;
  align-items: center;
  gap: 12px;
  width: 274px;
  height: 39px;
  padding: 0 5px 0 14px;
  border: 1px solid #b5d9d9;
  border-radius: 20px;
  background: #effbfb;
}
.search input { flex: 1; min-width: 0; padding: 0; border: 0; background: none; font-size: 17px; }
.search input::placeholder { color: #5e6a6a; }
.tray { display: flex; align-items: center; justify-content: flex-end; padding-right: 24px; }
.tray-item { width: 40px; height: 40px; display: grid; place-items: center; color: #1b1b1b; }
.ime { font-size: 20px; }
.tray-quick { display: flex; align-items: center; justify-content: center; gap: 10px; width: 60px; margin: 0 15px 0 4px; }
.clock { display: flex; flex-direction: column; align-items: flex-end; min-width: 77px; font-size: 14px; line-height: 20px; color: #1b1b1b; }
```
